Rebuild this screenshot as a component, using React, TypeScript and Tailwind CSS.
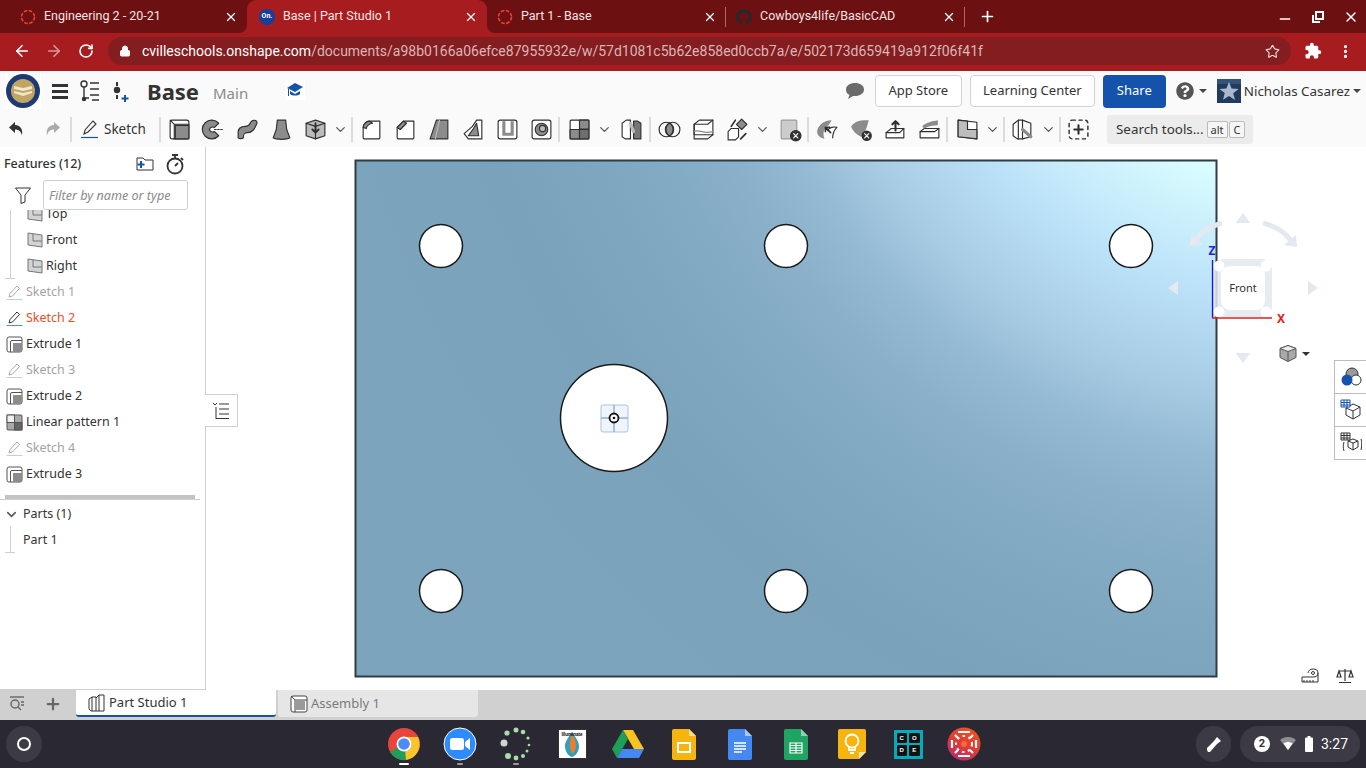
import { ArrowLeft, ArrowRight, ChevronDown, Lock, Minus, MoreVertical, Plus, RotateCw, Star, X } from 'lucide-react';
import { ReactNode } from 'react';
import { FaGithub, FaQuestionCircle } from 'react-icons/fa';
import { MdExtension } from 'react-icons/md';

const G = '#8c8c8c';
const D = '#2f2f2f';

function Ico({ size = 25, box = 24, children }: { size?: number; box?: number; children: ReactNode }) {
  return (
    <svg width={size} height={size} viewBox={`0 0 ${box} ${box}`} fill="none" stroke={D} strokeWidth={1.1} strokeLinejoin="round" strokeLinecap="round">
      {children}
    </svg>
  );
}

// toolbar glyphs
const toolIcons: Record<string, ReactNode> = {
  extrude: <><rect x="3" y="3" width="18" height="18" rx="2" fill="#fff" /><path d="M3 3l4 4h14M7 7v14" /><rect x="8" y="8" width="13" height="13" fill={G} /></>,
  revolve: <><path d="M17 6a9 9 0 1 0 0 12l-4-4a3.500 3.500 0 0 1-5-2 3.500 3.500 0 0 1 5-2z" fill={G} /><path d="M13 12h9" strokeDasharray="1.500 1.500" /></>,
  sweep: <path d="M3 20v-5c0-5 3-6 7-6 4 0 4-2 5-4 2-3 7-2 6 1-1 3-4 9-9 9-3 0-4 1-4 5-1 1-4 1-5 0z" fill={G} />,
  loft: <path d="M8 3h8l1 9 3 8c-3 2-13 2-16 0l3-8z" fill={G} />,
  thicken: <><path d="M3 6l9-3 9 3v12l-9 3-9-3z" fill="#bbb" /><path d="M3 6l9 3 9-3M12 9v12" /><path d="M12 6v9m-3-3l3 3 3-3" strokeWidth={1.800} /></>,
  fillet: <><path d="M5 21h14a1 1 0 0 0 1-1V4H10C7 4 4 7 4 10v10a1 1 0 0 0 1 1z" fill="#fff" /><path d="M4 10c0-3 3-6 6-6l3 2c-3 0-6 3-6 5z" fill={G} /></>,
  chamfer: <><path d="M5 21h14a1 1 0 0 0 1-1V4H10L4 10v10a1 1 0 0 0 1 1z" fill="#fff" /><path d="M10 4l3 2-6 6-3-2z" fill={G} /></>,
  draft: <><path d="M9 3h11v18H3z" fill={G} /><path d="M12 3L8 21" stroke="#bbb" /></>,
  rib: <><path d="M3 16l8-7 4-6h5v18H7z" fill="#fff" /><path d="M12 11l3-5 2 12H7z" fill={G} /></>,
  shell: <><rect x="3" y="3" width="18" height="18" rx="2" fill="#fff" /><path d="M7 4v14h11V4h-3v11h-5V4z" fill={G} stroke="none" /></>,
  hole: <><rect x="3" y="3" width="18" height="18" rx="2" fill="#fff" /><circle cx="12" cy="12" r="6" fill={G} /><circle cx="13" cy="11" r="3" fill="#bbb" /></>,
  pattern: <><rect x="3" y="3" width="18" height="18" rx="1" fill="#fff" /><rect x="12" y="3" width="9" height="8.500" fill={G} /><rect x="3" y="12" width="9" height="9" fill={G} /><rect x="12" y="12" width="9" height="9" fill="#6f6f6f" /></>,
  mirror: <><path d="M3 6l4-3h4v18H6l-3-2z" fill="#fff" /><path d="M14 4h4l3 2v15h-7z" fill="#777" /><path d="M11 6l3 8" stroke="#bbb" strokeWidth={3} /></>,
  boolean: <><circle cx="9" cy="12" r="7" /><circle cx="15" cy="12" r="7" /><path d="M12 6a7 7 0 0 1 0 12 7 7 0 0 1 0-12z" fill={G} /></>,
  split: <><path d="M3 7l5-4h13v14H3z" fill="#fff" /><path d="M3 7h13l5-4M3 7v14h13l5-4" /><path d="M3 14c5-3 8 3 18 0" stroke={G} /></>,
  transform: <><path d="M3 14l3-3h7v8l-3 3H3z" fill="#fff" /><path d="M16 2l5 5-5 5-5-5z" fill={G} /><path d="M6 9l4-6M15 21l5-5" strokeWidth={1.600} /></>,
  deleteBody: <><rect x="4" y="3" width="15" height="18" rx="1" fill="#ccc" stroke="#999" /><circle cx="18" cy="18" r="5" fill="#333" /><path d="M16 16l4 4m0-4l-4 4" stroke="#fff" /></>,
  modifyFillet: <><path d="M2 14C3 7 9 3 16 3l-3 5C9 9 7 15 9 21 5 20 2 18 2 14z" fill={G} stroke="none" /><path d="M12 13c2-3 6-4 9-3-2 2-4 6-4 10" fill="#fff" /><path d="M10 10l5 5m-5-5v4m0-4h4" strokeWidth={1.600} /></>,
  deleteFace: <><path d="M2 9c4-6 10-6 17-6l-2 7-4 9C8 18 4 14 2 9z" fill={G} stroke="none" /><circle cx="17" cy="18" r="5" fill="#333" stroke="none" /><path d="M15 16l4 4m0-4l-4 4" stroke="#fff" /></>,
  moveFace: <><path d="M3 15l5-4h12v9H3z" fill="#fff" /><path d="M3 15h13l4-4" /><path d="M12 13V4m-3 3l3-3 3 3" strokeWidth={2} /></>,
  replaceFace: <><path d="M3 14l4-3h14v9H3z" fill="#fff" /><path d="M3 14h14l4-3" /><path d="M5 9c3-4 10-5 15-6v5c-5 0-9 1-13 3z" fill={G} stroke="none" /></>,
  plane: <><path d="M3 3l18 2v16L3 19z" fill="#fff" /><path d="M3 3l9 1v8h9v9L3 19z" fill="#bdbdbd" /></>,
  enclose: <><path d="M3 7l5-4h4v18H7l-4-3z" fill="#fff" /><path d="M8 3v18M12 3l8 3v13l-8 2" /><path d="M12 12l8 7" stroke={G} strokeWidth={3} /></>,
  customAdd: <><rect x="3" y="3" width="18" height="18" rx="3" strokeDasharray="3 3.500" strokeWidth={1.400} /><path d="M12 8v8M8 12h8" strokeWidth={2} /></>,
};

const Tool = ({ name }: { name: string }) => (
  <div className="flex h-full w-[34px] shrink-0 items-center justify-center">
    <Ico>{toolIcons[name]}</Ico>
  </div>
);

const Chev = () => (
  <div className="flex w-4 shrink-0 items-center justify-center text-[#555]">
    <ChevronDown size={15} strokeWidth={2} />
  </div>
);

const Sep = ({ className = '' }: { className?: string }) => <div className={`h-[25px] w-[2px] shrink-0 bg-[#dcdcdc] ${className}`} />;

const RedRing = () => (
  <svg width="16" height="16" viewBox="0 0 16 16" fill="none" className="shrink-0">
    <circle cx="8" cy="8" r="6.500" stroke="#ea4335" strokeWidth="1.600" strokeDasharray="3.600 1.500" />
  </svg>
);

function Tab({ icon, title, active, width, divider }: { icon: ReactNode; title: string; active?: boolean; width: string; divider?: boolean }) {
  return (
    <div className={`relative flex h-[33px] items-center text-[12.5px] text-[#f3e3e3] ${width} ${active ? 'rounded-t-[9px] bg-[#a71c1f]' : ''}`}>
      {active && (
        <>
          <div className="absolute -left-[8px] bottom-0 h-[8px] w-[8px] bg-[#a71c1f]"><div className="h-full w-full rounded-br-[8px] bg-[#6c1012]" /></div>
          <div className="absolute -right-[8px] bottom-0 h-[8px] w-[8px] bg-[#a71c1f]"><div className="h-full w-full rounded-bl-[8px] bg-[#6c1012]" /></div>
        </>
      )}
      <span className="flex w-[16px] shrink-0 justify-center">{icon}</span>
      <span className="ml-[8px] flex-1 whitespace-nowrap">{title}</span>
      <X size={14} strokeWidth={2.200} className="mr-[9px] text-white" />
      {divider && <div className="absolute right-0 top-[7px] h-[20px] w-px bg-[#a86a6a]" />}
    </div>
  );
}

function TabStrip() {
  return (
    <div className="flex h-[33px] items-start bg-[#6c1012] font-['Roboto',sans-serif]">
      <Tab width="w-[247px] pl-[20px]" icon={<RedRing />} title="Engineering 2 - 20-21" />
      <Tab
        width="w-[240px] pl-[12px]"
        active
        icon={
          <span className="flex h-[16px] w-[16px] items-center justify-center rounded-full bg-[#153f9b] text-[7px] font-bold text-white">On.</span>
        }
        title="Base | Part Studio 1"
      />
      <Tab width="w-[239px] pl-[10px]" divider icon={<RedRing />} title="Part 1 - Base" />
      <Tab width="w-[239px] pl-[10px]" divider icon={<FaGithub size={16} className="text-[#24292e]" />} title="Cowboys4life/BasicCAD" />
      <div className="ml-[14px] flex h-[33px] items-center text-white">
        <Plus size={17} strokeWidth={2.400} />
      </div>
      <div className="ml-auto flex h-[33px] items-center gap-[17px] pr-[7px] text-white">
        <Minus size={16} strokeWidth={2.200} className="mt-[5px]" />
        <svg width="16" height="16" viewBox="0 0 16 16" fill="none" stroke="#fff" strokeWidth="2">
          <rect x="6" y="3" width="7" height="7" />
          <path d="M3 6v7h7" />
        </svg>
        <X size={16} strokeWidth={2.200} />
      </div>
    </div>
  );
}

function AddressBar() {
  return (
    <div className="flex h-[38px] items-center bg-[#a71c1f] pb-[2px] font-['Roboto',sans-serif] text-white">
      <ArrowLeft size={18} strokeWidth={2.200} className="ml-[13px]" />
      <ArrowRight size={18} strokeWidth={2.200} className="ml-[14px] text-[#d79b9c]" />
      <RotateCw size={16} strokeWidth={2.400} className="ml-[15px]" />
      <div className="ml-[14px] flex h-[28px] w-[1183px] items-center rounded-full bg-[#841d20] pl-[11px] text-[14px]">
        <Lock size={12} fill="#fff" strokeWidth={2} />
        <span className="ml-[11px] whitespace-nowrap">
          cvilleschools.onshape.com<span className="text-[#dbb5b6]">/documents/a98b0166a06efce87955932e/w/57d1081c5b62e858ed0ccb7a/e/502173d659419a912f06f41f</span>
        </span>
        <Star size={15} strokeWidth={1.800} className="ml-auto mr-[11px] text-[#f0dcdc]" />
      </div>
      <MdExtension size={18} className="ml-[13px]" />
      <MoreVertical size={17} strokeWidth={2.600} className="ml-[15px]" />
    </div>
  );
}

const Seal = () => (
  <svg width="36" height="36" viewBox="0 0 36 36">
    <rect width="36" height="36" fill="#fff" />
    <circle cx="18" cy="18" r="17" fill="#1d3a75" />
    <circle cx="18" cy="18" r="12" fill="#c0a565" />
    <path d="M9 13l9 2 9-2v3l-9 2-9-2zm0 5l9 2 9-2v2l-9 3-9-3z" fill="#efe6cd" />
  </svg>
);

function AppHeader() {
  return (
    <div className="flex h-[40px] items-center bg-[#fafafa] text-[#333]">
      <div className="ml-[5px]"><Seal /></div>
      <div className="ml-[11px] flex w-[16px] flex-col gap-[3px]">
        <div className="h-[3px] bg-[#333]" /><div className="h-[3px] bg-[#333]" /><div className="h-[3px] bg-[#333]" />
      </div>
      <svg width="22" height="24" viewBox="0 0 22 24" fill="none" stroke="#333" strokeWidth="1.400" className="ml-[11px]">
        <circle cx="5" cy="5" r="3" /><path d="M5 8v11h5" /><circle cx="5" cy="20" r="1.500" fill="#333" />
        <path d="M11 4h9M11 10h9M11 16h9M13 21h7" />
      </svg>
      <svg width="20" height="22" viewBox="0 0 20 22" className="ml-[11px]">
        <circle cx="5" cy="10" r="3.200" fill="#333" /><rect x="4" y="2" width="2" height="4" fill="#333" /><rect x="4" y="15" width="2" height="4" fill="#333" />
        <path d="M13 15v7M9.500 18.500h7" stroke="#1552ab" strokeWidth="2" />
      </svg>
      <span className="ml-[15px] font-['Noto_Sans',sans-serif] text-[22px] font-bold">Base</span>
      <span className="ml-[14px] mt-[4px] font-['Noto_Sans',sans-serif] text-[15px] text-[#8a8a8a]">Main</span>
      <div className="ml-[37px] mb-[2px] flex h-[20px] w-[20px] items-center justify-center bg-white">
        <svg width="16" height="16" viewBox="0 0 16 16" fill="#1552ab">
          <path d="M8 1L0 6l8 4 8-5z" /><path d="M3 9v3c2 2 8 2 10 0V9l-5 3z" /><path d="M1 7h1v7H1z" />
        </svg>
      </div>
      <svg width="22" height="20" viewBox="0 0 22 20" className="ml-auto" fill="#6b6b6b">
        <path d="M11 2c5 0 9 2.500 9 6.500S16 15 11 15h-2l-5 3 1.500-4C3 13 2 11 2 8.500 2 4.500 6 2 11 2z" />
      </svg>
      <div className="ml-[9px] flex h-[32px] w-[87px] items-center justify-center rounded-[4px] border border-[#d3d3d3] bg-white font-['Noto_Sans',sans-serif] text-[13px]">App Store</div>
      <div className="ml-[8px] flex h-[32px] w-[125px] items-center justify-center rounded-[4px] border border-[#d3d3d3] bg-white font-['Noto_Sans',sans-serif] text-[13px]">Learning Center</div>
      <div className="ml-[8px] flex h-[33px] w-[63px] items-center justify-center rounded-[4px] bg-[#1552ab] font-['Noto_Sans',sans-serif] text-[13px] text-white">Share</div>
      <FaQuestionCircle size={18} className="ml-[10px] text-[#555]" />
      <div className="ml-[5px] h-0 w-0 border-x-[4px] border-t-[4px] border-x-transparent border-t-[#444]" />
      <svg width="24" height="24" viewBox="0 0 24 24" className="ml-[10px]">
        <rect width="24" height="24" fill="#223a5c" />
        <path d="M0 0h24v5H0z" fill="#35527a" />
        <path d="M12 3l2.600 6.500 7 .4-5.400 4.400 1.800 6.700L12 17l-6 3.800 1.800-6.700L2.400 9.900l7-.4z" fill="#a8b8cf" />
      </svg>
      <span className="ml-[3px] whitespace-nowrap font-['Noto_Sans',sans-serif] text-[13.4px]">Nicholas Casarez</span>
      <div className="ml-[3px] mr-[5px] h-0 w-0 border-x-[4px] border-t-[4px] border-x-transparent border-t-[#444]" />
    </div>
  );
}

function Toolbar() {
  return (
    <div className="flex h-[36px] items-center bg-[#fafafa]">
      <div className="flex h-full w-[34px] items-center justify-center">
        <svg width="18" height="18" viewBox="0 0 18 18" fill="#333"><path d="M7 2L1 7.500 7 13V9.500c4 0 6 2 7 6 1-6-1-10-7-10.500z" /></svg>
      </div>
      <div className="flex h-full w-[35px] items-center justify-center">
        <svg width="18" height="18" viewBox="0 0 18 18" fill="#aaa"><path d="M11 2l6 5.500L11 13V9.500c-4 0-6 2-7 6-1-6 1-10 7-10.500z" /></svg>
      </div>
      <Sep className="ml-[1px]" />
      <div className="flex w-[87px] items-center pl-[8px] font-['Noto_Sans',sans-serif] text-[13.5px] text-[#333]">
        <svg width="20" height="20" viewBox="0 0 20 20" fill="none" stroke="#333" strokeWidth="1.100">
          <path d="M4 15l1-4 8-9 3 3-8 8z" /><path d="M1 18.500h17" stroke="#1552ab" strokeWidth="1.200" />
        </svg>
        <span className="ml-[4px]">Sketch</span>
      </div>
      <Sep />
      <div className="ml-[1px] flex h-full items-center">
        <Tool name="extrude" /><Tool name="revolve" /><Tool name="sweep" /><Tool name="loft" /><Tool name="thicken" /><Chev />
      </div>
      <Sep className="ml-[3px]" />
      <div className="ml-[1px] flex h-full items-center">
        <Tool name="fillet" /><Tool name="chamfer" /><Tool name="draft" /><Tool name="rib" /><Tool name="shell" /><Tool name="hole" />
      </div>
      <Sep />
      <div className="ml-[2px] flex h-full items-center">
        <Tool name="pattern" /><Chev /><div className="w-[2px]" /><Tool name="mirror" />
      </div>
      <Sep className="ml-[1px]" />
      <div className="ml-[1px] flex h-full items-center">
        <Tool name="boolean" /><Tool name="split" /><Tool name="transform" /><Chev /><div className="w-[2px]" /><Tool name="deleteBody" />
      </div>
      <div className="w-px" />
      <Sep />
      <div className="ml-[1px] flex h-full items-center">
        <Tool name="modifyFillet" /><Tool name="deleteFace" /><Tool name="moveFace" /><Tool name="replaceFace" />
      </div>
      <Sep />
      <div className="ml-[2px] flex h-full items-center">
        <Tool name="plane" /><Chev />
      </div>
      <Sep className="ml-[3px]" />
      <div className="flex h-full items-center">
        <Tool name="enclose" /><div className="w-px" /><Chev />
      </div>
      <Sep className="ml-[3px]" />
      <Tool name="customAdd" />
      <div className="ml-[12px] flex h-[29px] w-[146px] items-center rounded-[3px] bg-[#ececec] pl-[9px] font-['Noto_Sans',sans-serif] text-[13.400px] text-[#333]">
        Search tools...
        <span className="ml-[3px] rounded-[2px] border border-[#bbb] bg-[#f6f6f6] px-[3px] text-[11px] leading-[15px]">alt</span>
        <span className="ml-[1px] rounded-[2px] border border-[#bbb] bg-[#f6f6f6] px-[4px] text-[11px] leading-[15px]">C</span>
      </div>
    </div>
  );
}

const SketchIcon = ({ on }: { on?: boolean }) => (
  <svg width="17" height="17" viewBox="0 0 17 17" fill="none" stroke={on ? '#333' : '#aaa'} strokeWidth="1">
    <path d="M3 13l1-3.500 7-7.500 2.500 2.500-7 7.500z" /><path d="M.5 15.500h16" stroke={on ? '#5b86c9' : '#bcd0ea'} />
  </svg>
);
const ExtrudeIcon = () => (
  <svg width="17" height="17" viewBox="0 0 17 17" fill="none" stroke="#555" strokeWidth="1">
    <rect x="1" y="1" width="15" height="15" rx="2" fill="#fff" /><path d="M4.500 16V6a1.500 1.500 0 0 1 1.500-1.500h10" />
    <rect x="7" y="7" width="9" height="9" fill="#8c8c8c" stroke="none" />
  </svg>
);
const PatternIcon = () => (
  <svg width="17" height="17" viewBox="0 0 17 17" fill="none" stroke="#555" strokeWidth="1">
    <rect x="1" y="1" width="15" height="15" rx="1" fill="#aaa" /><rect x="1" y="1" width="7.500" height="7.500" fill="#eee" />
    <rect x="8.500" y="8.500" width="7.500" height="7.500" fill="#666" /><path d="M8.500 1v15M1 8.500h15" />
  </svg>
);
const PlaneIcon = () => (
  <svg width="16" height="16" viewBox="0 0 16 16" stroke="#777" strokeWidth="1" fill="#d3d3d3">
    <path d="M1 1l14 2v12L1 13z" /><path d="M6 1.700V9h9" fill="none" />
  </svg>
);

type Row = { label: string; icon: ReactNode; tone?: string; plane?: boolean };
const rows: Row[] = [
  { label: 'Top', icon: <PlaneIcon />, plane: true },
  { label: 'Front', icon: <PlaneIcon />, plane: true },
  { label: 'Right', icon: <PlaneIcon />, plane: true },
  { label: 'Sketch 1', icon: <SketchIcon />, tone: 'text-[#a3a3a3]' },
  { label: 'Sketch 2', icon: <SketchIcon on />, tone: 'text-[#e2502a]' },
  { label: 'Extrude 1', icon: <ExtrudeIcon /> },
  { label: 'Sketch 3', icon: <SketchIcon />, tone: 'text-[#a3a3a3]' },
  { label: 'Extrude 2', icon: <ExtrudeIcon /> },
  { label: 'Linear pattern 1', icon: <PatternIcon /> },
  { label: 'Sketch 4', icon: <SketchIcon />, tone: 'text-[#a3a3a3]' },
  { label: 'Extrude 3', icon: <ExtrudeIcon /> },
];

function FeatureTree() {
  return (
    <div className="relative flex w-[206px] shrink-0 flex-col border-r border-b border-[#cfcfcf] bg-white font-['Noto_Sans',sans-serif] text-[12.5px] text-[#333]">
      <div className="flex h-[33px] items-center pl-[4px] pt-[1px]">
        <span className="w-[79px] whitespace-nowrap font-medium">Features (12)</span>
        <svg width="20" height="18" viewBox="0 0 20 18" fill="none" stroke="#333" strokeWidth="1" className="ml-[52px]">
          <path d="M2 15V3h6l2 2h8v10H2z" />
          <path d="M6 6v7M2.500 9.500h7" stroke="#1552ab" strokeWidth="2" />
        </svg>
        <svg width="20" height="22" viewBox="0 0 20 22" fill="none" stroke="#333" strokeWidth="1.800" className="ml-[10px]">
          <circle cx="10" cy="13" r="7.500" /><path d="M7 2h6M10 2v3M10 13l3-3M16 5l2 2" />
        </svg>
      </div>
      <div className="flex h-[30px] items-center">
        <svg width="16" height="17" viewBox="0 0 16 17" fill="none" stroke="#333" strokeWidth="1" className="ml-[15px]">
          <path d="M.5 1h15L10 8v7l-4 1.500V8z" />
        </svg>
        <div className="ml-[12px] flex h-[30px] w-[145px] items-center rounded-[3px] border border-[#cfcfcf] pl-[5px] pt-[2px] text-[12.6px] italic text-[#8a8a8a]">Filter by name or type</div>
      </div>
      <div className="relative h-[285px] overflow-hidden">
        <div className="-mt-[9px]">
          {rows.map((r) => (
            <div key={r.label} className={`flex h-[26px] items-center ${r.plane ? 'pl-[26px]' : 'pl-[6px]'} ${r.tone ?? ''}`}>
              <span className="flex w-[17px] justify-center">{r.icon}</span>
              <span className="ml-[3px]">{r.label}</span>
            </div>
          ))}
        </div>
        <div className="absolute left-[10px] top-0 h-[68px] w-px bg-[#cfcfcf]" />
        <div className="absolute left-[5px] top-[68px] h-px w-[10px] bg-[#cfcfcf]" />
      </div>
      <div className="ml-[5px] h-[4px] w-[190px] bg-[#c4c4c4]" />
      <div className="mr-[5px] h-px bg-[#cfcfcf]" />
      <div className="relative pt-px">
        <div className="flex h-[26px] items-center pl-[4px]">
          <ChevronDown size={15} strokeWidth={2.400} className="text-[#555]" />
          <span className="ml-[4px]">Parts (1)</span>
        </div>
        <div className="flex h-[26px] items-center pl-[23px]">Part 1</div>
        <div className="absolute left-[10px] top-[26px] h-[26px] w-px bg-[#cfcfcf]" />
        <div className="absolute left-[5px] top-[52px] h-px w-[10px] bg-[#cfcfcf]" />
      </div>
      <div className="absolute -right-[33px] top-[247px] z-10 flex h-[33px] w-[33px] items-center justify-center border border-l-0 border-[#cfcfcf] bg-white">
        <svg width="18" height="18" viewBox="0 0 18 18" fill="none" stroke="#333" strokeWidth="1">
          <path d="M1 1l2 2 2-2M4 5v12M7 2h10M7 7h10M7 12h10M4 16.500h13" />
        </svg>
      </div>
      <div className="absolute -right-px top-[248px] z-20 h-[31px] w-[2px] bg-white" />
    </div>
  );
}

const holes = [[86, 86], [431, 86], [776, 86], [86, 431], [431, 431], [776, 431]];

function Plate() {
  return (
    <svg width="865" height="520" viewBox="-1 -1 865 520" className="absolute left-[148px] top-[12px]">
      <defs>
        <radialGradient id="shine" gradientUnits="userSpaceOnUse" cx="945" cy="-260" r="1000">
          <stop offset="0.27" stopColor="#dcffff" />
          <stop offset="0.4" stopColor="#bce2f9" />
          <stop offset="0.5" stopColor="#a6cbe3" />
          <stop offset="0.56" stopColor="#95bad3" />
          <stop offset="0.62" stopColor="#8bb0ca" />
          <stop offset="0.68" stopColor="#84abc4" />
          <stop offset="0.74" stopColor="#80a7c0" />
          <stop offset="0.84" stopColor="#7ba2bb" />
          <stop offset="1" stopColor="#7da4bd" />
        </radialGradient>
      </defs>
      <rect x="0.5" y="0.5" width="861" height="516" fill="url(#shine)" stroke="#2f3c44" strokeWidth="2" />
      {holes.map(([x, y]) => (
        <circle key={`${x}-${y}`} cx={x} cy={y} r="21.500" fill="#fff" stroke="#1a1a1a" strokeWidth="1.500" />
      ))}
      <circle cx="259" cy="258" r="53.500" fill="#fff" stroke="#1a1a1a" strokeWidth="1.500" />
      <rect x="246" y="245" width="27" height="27" rx="2" fill="#f0f5fb" stroke="#a9c3e4" />
      <path d="M259 245v27M246 258h27" stroke="#8fb0d8" strokeWidth="1.500" />
      <circle cx="259" cy="258" r="4.500" fill="#fff" stroke="#111" strokeWidth="1.800" />
      <circle cx="259" cy="258" r="1.300" fill="#111" />
    </svg>
  );
}

function NavCube() {
  return (
    <svg width="160" height="170" viewBox="0 0 160 170" className="absolute left-[960px] top-[65px]">
      <g fill="#e3e9ef">
        <path d="M77 1l7.500 10h-15zM77 151l-7.500-10h15zM2 76l10-7v14zM152 76l-10-7v14z" />
        <path d="M56 47h42l8 8v42l-8 8H56l-8-8V55z" fillOpacity="0.85" />
        <path d="M23 34l3-11 11 10zM131 35l-1-12-12 10z" />
      </g>
      <path d="M56 11c-12 3-22 10-29 20M97 11c12 3 22 9 29 19" stroke="#e3e9ef" strokeWidth="5" fill="none" />
      <rect x="55" y="54" width="44" height="44" rx="9" fill="#fff" />
      <circle cx="53" cy="54" r="5.500" fill="#fff" /><circle cx="53" cy="100" r="5.500" fill="#fff" />
      <circle cx="100" cy="100" r="5.500" fill="#fff" /><circle cx="100" cy="54" r="5.500" fill="#fff" />
      <path d="M46.500 48v58" stroke="#1414e6" strokeWidth="1.300" />
      <path d="M46 106h60" stroke="#e31c1c" strokeWidth="1.300" />
      <text x="77" y="80" textAnchor="middle" fontSize="11" fill="#333" fontFamily="Noto Sans, sans-serif">Front</text>
      <text x="46" y="43" textAnchor="middle" fontSize="12" fontWeight="700" fill="#2222dd" fontFamily="Noto Sans, sans-serif">Z</text>
      <text x="115" y="111" textAnchor="middle" fontSize="12" fontWeight="700" fill="#e31c1c" fontFamily="Noto Sans, sans-serif">X</text>
    </svg>
  );
}

function Viewport() {
  return (
    <div className="relative flex-1 bg-white">
      <Plate />
      <NavCube />
      <div className="absolute left-[1073px] top-[197px] flex items-center">
        <svg width="18" height="19" viewBox="0 0 18 18" stroke="#555" strokeWidth="1">
          <path d="M9 1l8 3v9l-8 4-8-4V4z" fill="#a9a9a9" /><path d="M1 4l8 3 8-3-8-3z" fill="#eee" /><path d="M9 7v10" />
        </svg>
        <div className="ml-[5px] h-0 w-0 border-x-[4px] border-t-[4px] border-x-transparent border-t-[#333]" />
      </div>
      <div className="absolute right-0 top-[213px] w-[32px] border border-r-0 border-[#bdbdbd] bg-white">
        <div className="flex h-[33px] items-center justify-center border-b border-[#bdbdbd]">
          <svg width="22" height="22" viewBox="0 0 22 22" stroke="#333" strokeWidth="1">
            <circle cx="12" cy="8" r="6" fill="#999" /><circle cx="16" cy="14" r="5" fill="#fff" /><circle cx="7" cy="14" r="5.500" fill="#1552ab" stroke="none" />
          </svg>
        </div>
        <div className="flex h-[33px] items-center justify-center border-b border-[#bdbdbd]">
          <svg width="22" height="22" viewBox="0 0 22 22" fill="none" stroke="#333" strokeWidth="1">
            <path d="M13 5l7 3v8l-7 4-7-4V9z" fill="#fff" /><path d="M6 9l7 3 7-4M13 12v8" />
            <path d="M1 1h9v7H1zM1 3.500h9M1 6h9M4 1v7M7 1v7" stroke="#1552ab" fill="#fff" />
          </svg>
        </div>
        <div className="flex h-[32px] items-center justify-center">
          <svg width="22" height="22" viewBox="0 0 22 22" fill="none" stroke="#333" strokeWidth="1">
            <path d="M13 7l5 2v6l-5 3-5-3V9zM8 9l5 2 5-2M13 11v7M21 7c1 3 1 7 0 11M4 10c-1 3-1 6 0 9" />
            <path d="M1 1h9v7H1zM1 3.500h9M1 6h9M4 1v7M7 1v7" fill="#fff" />
          </svg>
        </div>
      </div>
      <div className="absolute bottom-[6px] right-[12px] flex items-center gap-[17px]">
        <svg width="18" height="16" viewBox="0 0 18 16" fill="none" stroke="#333" strokeWidth="1">
          <path d="M1 9h11c3 0 5-1 5-4s-2-4-5-4-5 2-5 4M1 9v5h16V5M3 14v-2M6 14v-2M9 14v-2M12 14v-2" /><circle cx="12" cy="5" r="1.500" />
        </svg>
        <svg width="18" height="16" viewBox="0 0 18 16" fill="none" stroke="#333" strokeWidth="1">
          <path d="M9 1v12M3 3h12M3 3L1 9h4zM15 3l-2 6h4zM3 14.500h12" strokeWidth="1.200" />
        </svg>
      </div>
    </div>
  );
}

function StudioTabs() {
  return (
    <div className="flex h-[30px] items-start bg-[#d0d0d0] font-['Noto_Sans',sans-serif] text-[13px]">
      <div className="flex h-[27px] w-[76px] items-center">
        <svg width="18" height="18" viewBox="0 0 18 18" fill="none" stroke="#666" strokeWidth="1.400" className="ml-[8px]">
          <path d="M2 2h14" /><circle cx="7" cy="9" r="4" /><path d="M10 12l3 3M13 7h3M13 10h3" />
        </svg>
        <Plus size={18} strokeWidth={3} className="ml-[18px] text-[#666]" />
      </div>
      <div className="flex h-[27px] w-[200px] items-center rounded-b-[3px] border-b-2 border-[#1552ab] bg-white pl-[11px] text-[#333]">
        <svg width="20" height="20" viewBox="0 0 20 20" fill="none" stroke="#333" strokeWidth="1">
          <path d="M2 6l3-2h4v14H4l-2-2zM5 4v14M9 5l3-3h5v16h-8M12 2v16" />
        </svg>
        <span className="ml-[2px]">Part Studio 1</span>
      </div>
      <div className="ml-[2px] flex h-[27px] w-[200px] items-center rounded-b-[3px] bg-[#e6e6e6] pl-[11px] text-[#7a7a7a]">
        <svg width="20" height="20" viewBox="0 0 20 20" fill="none" stroke="#444" strokeWidth="1">
          <rect x="2" y="2" width="16" height="16" rx="2" fill="#fff" /><path d="M2 2l4 4h12M6 6v12" /><rect x="6" y="6" width="10" height="10" fill="#999" stroke="none" />
        </svg>
        <span className="ml-[2px]">Assembly 1</span>
      </div>
    </div>
  );
}

const ChromeLogo = () => (
  <svg width="34" height="34" viewBox="0 0 34 34">
    <circle cx="17" cy="17" r="16" fill="#e8453c" />
    <path d="M17 17L3 25A16 16 0 0 0 19 33z" fill="#1e9e57" />
    <path d="M17 10h14a16 16 0 0 1-12 23z" fill="#f8c52c" />
    <circle cx="17" cy="17" r="7.500" fill="#fff" /><circle cx="17" cy="17" r="5.800" fill="#4a8bf5" />
  </svg>
);
const ZoomLogo = () => (
  <svg width="34" height="34" viewBox="0 0 34 34">
    <circle cx="17" cy="17" r="16" fill="#2d8cff" stroke="#fff" strokeWidth="1" />
    <rect x="7" y="11" width="14" height="12" rx="2.500" fill="#fff" /><path d="M22 15l5-4v12l-5-4z" fill="#fff" />
  </svg>
);
const LoaderDots = () => (
  <svg width="34" height="34" viewBox="0 0 34 34">
    {[[17, 3, 2.5], [24, 5, 2.3], [29, 11, 1.6], [30, 18, 1.3], [28, 24, 1.5], [24, 29, 2], [17, 31, 2.4], [9, 29, 3], [5, 16, 3.5], [8, 6, 2.6]].map(([x, y, r]) => (
      <circle key={`${x}-${y}`} cx={x} cy={y} r={r} fill={x === 5 ? '#cfd8d0' : '#a9dca8'} />
    ))}
  </svg>
);
const Illuminate = () => (
  <div className="relative flex h-[30px] w-[29px] flex-col items-center overflow-hidden border border-[#333] bg-white">
    <span className="absolute top-[3px] z-10 font-['Liberation_Sans',sans-serif] text-[4.500px] font-bold leading-none text-black">Illuminate</span>
    <svg width="20" height="28" viewBox="0 0 20 28">
      <path d="M10 2c3 5 7 9 7 14 0 5-3 10-7 11-4-1-7-6-7-11 0-5 4-9 7-14z" fill="#2e9fbd" />
      <path d="M10 4c2 4 4 7 4 11s-2 8-4 9c-1-5-3-6-2-11 0-3 1-6 2-9z" fill="#ef7b2d" />
    </svg>
  </div>
);
const Drive = () => (
  <svg width="34" height="30" viewBox="0 0 34 30">
    <path d="M12 1h10l11 19H23z" fill="#f9c41f" /><path d="M12 1L1 20l5 9 11-19z" fill="#1e9e57" /><path d="M6 29l5-9h22l-5 9z" fill="#4688f1" />
  </svg>
);
const DocFile = ({ color, fold, children }: { color: string; fold: string; children: ReactNode }) => (
  <svg width="24" height="31" viewBox="0 0 24 31">
    <path d="M2 0h15l7 7v22a2 2 0 0 1-2 2H2a2 2 0 0 1-2-2V2a2 2 0 0 1 2-2z" fill={color} />
    <path d="M17 0l7 7h-7z" fill={fold} />
    {children}
  </svg>
);
const Keep = () => (
  <svg width="28" height="30" viewBox="0 0 28 30">
    <path d="M2 0h24a2 2 0 0 1 2 2v21l-7 7H2a2 2 0 0 1-2-2V2a2 2 0 0 1 2-2z" fill="#f6b40f" />
    <path d="M21 30l7-7h-7z" fill="#fbe6a8" />
    <circle cx="14" cy="12" r="6.500" fill="none" stroke="#fff" strokeWidth="1.800" /><path d="M11 18v3h6v-3M12 24h4" stroke="#fff" strokeWidth="1.800" fill="none" />
  </svg>
);
const CodeTile = () => (
  <div className="grid h-[29px] w-[29px] grid-cols-2 gap-[2px] bg-[#00adbc] p-[3px] font-['Liberation_Sans',sans-serif] text-[6px] font-bold leading-none text-white">
    {['C', 'O', 'D', 'E'].map((c) => (
      <span key={c} className="flex items-center justify-center rounded-[1px] bg-[#111]">{c}</span>
    ))}
  </div>
);
const CanvasLogo = () => (
  <svg width="34" height="34" viewBox="0 0 34 34">
    <defs>
      <linearGradient id="canvasRed" x1="0.700" y1="0" x2="0.200" y2="1"><stop offset="0" stopColor="#f0531e" /><stop offset="0.550" stopColor="#dc3a3a" /><stop offset="1" stopColor="#b52d72" /></linearGradient>
    </defs>
    <circle cx="17" cy="17" r="16.500" fill="url(#canvasRed)" />
    <circle cx="17" cy="17" r="8" fill="none" stroke="#fff" strokeWidth="2" strokeDasharray="2.500 3.500" />
    <path d="M11 5h12M11 29h12M5 13v8M29 13v8M8 8l3 3M26 8l-3 3M8 26l3-3M26 26l-3-3" stroke="#fff" strokeWidth="2.200" />
    <circle cx="17" cy="17" r="3" fill="#f26b3a" />
  </svg>
);

const shelfApps: { key: string; node: ReactNode; mark?: string }[] = [
  { key: 'chrome', node: <ChromeLogo />, mark: 'w-[10px] bg-white' },
  { key: 'zoom', node: <ZoomLogo />, mark: 'w-[6px] bg-[#9a9a9a]' },
  { key: 'loader', node: <LoaderDots />, mark: 'w-[6px] bg-[#9a9a9a]' },
  { key: 'illuminate', node: <Illuminate /> },
  { key: 'drive', node: <Drive /> },
  {
    key: 'slides',
    node: (
      <DocFile color="#f6b40f" fold="#fbe08a">
        <rect x="5" y="13" width="14" height="11" fill="#fff" /><rect x="7" y="15" width="10" height="7" fill="#f6b40f" />
      </DocFile>
    ),
  },
  {
    key: 'docs',
    node: (
      <DocFile color="#4688f1" fold="#a9c6f8">
        <path d="M6 14h12M6 17h12M6 20h12M6 23h8" stroke="#fff" strokeWidth="1.500" />
      </DocFile>
    ),
  },
  {
    key: 'sheets',
    node: (
      <DocFile color="#1fa463" fold="#8ed1b1">
        <path d="M6 14h12v10H6zM6 19h12M12 14v10M6 16.500h12M6 21.500h12" stroke="#fff" strokeWidth="1.200" fill="none" />
      </DocFile>
    ),
  },
  { key: 'keep', node: <Keep /> },
  { key: 'code', node: <CodeTile /> },
  { key: 'canvas', node: <CanvasLogo /> },
];

function Shelf() {
  return (
    <div className="flex h-[48px] items-center bg-[#2a2933] font-['Roboto',sans-serif] text-white">
      <div className="ml-[6px] flex h-[36px] w-[36px] items-center justify-center rounded-full bg-[#3c3b45]">
        <div className="h-[14px] w-[14px] rounded-full border-2 border-white" />
      </div>
      <div className="ml-[334px] flex">
        {shelfApps.map((a) => (
          <div key={a.key} className="relative flex h-[48px] w-[56px] items-center justify-center">
            {a.node}
            {a.mark && <div className={`absolute bottom-[3px] h-[2px] rounded-full ${a.mark}`} />}
          </div>
        ))}
      </div>
      <div className="ml-[204px] flex h-[36px] w-[35px] items-center justify-center rounded-full bg-[#3c3b45]">
        <svg width="18" height="18" viewBox="0 0 18 18" fill="#fff"><path d="M12 2l4 4-4 3-7 8-2 0-1-2 0-2 7-7z" /></svg>
      </div>
      <div className="ml-[9px] flex h-[36px] w-[120px] items-center rounded-full bg-[#3c3b45] pl-[14px] text-[14px]">
        <span className="flex h-[16px] w-[16px] items-center justify-center rounded-full bg-white text-[11px] font-bold text-[#333]">2</span>
        <svg width="16" height="14" viewBox="0 0 16 14" className="ml-[10px]">
          <path d="M0 3c4-4 12-4 16 0L8 13z" fill="#8e8e93" /><path d="M3.500 6.500c2.500-2 6.500-2 9 0L8 13z" fill="#fff" />
        </svg>
        <svg width="8" height="16" viewBox="0 0 8 16" className="ml-[9px]" fill="#fff"><path d="M2.500 0h3v1.500H7a1 1 0 0 1 1 1V15a1 1 0 0 1-1 1H1a1 1 0 0 1-1-1V2.500a1 1 0 0 1 1-1h1.500z" /></svg>
        <span className="ml-[8px]">3:27</span>
      </div>
    </div>
  );
}

export default function App() {
  return (
    <div className="flex h-[768px] w-[1366px] flex-col overflow-hidden bg-white">
      <TabStrip />
      <AddressBar />
      <AppHeader />
      <Toolbar />
      <div className="flex h-[543px]">
        <FeatureTree />
        <Viewport />
      </div>
      <StudioTabs />
      <Shelf />
    </div>
  );
}
